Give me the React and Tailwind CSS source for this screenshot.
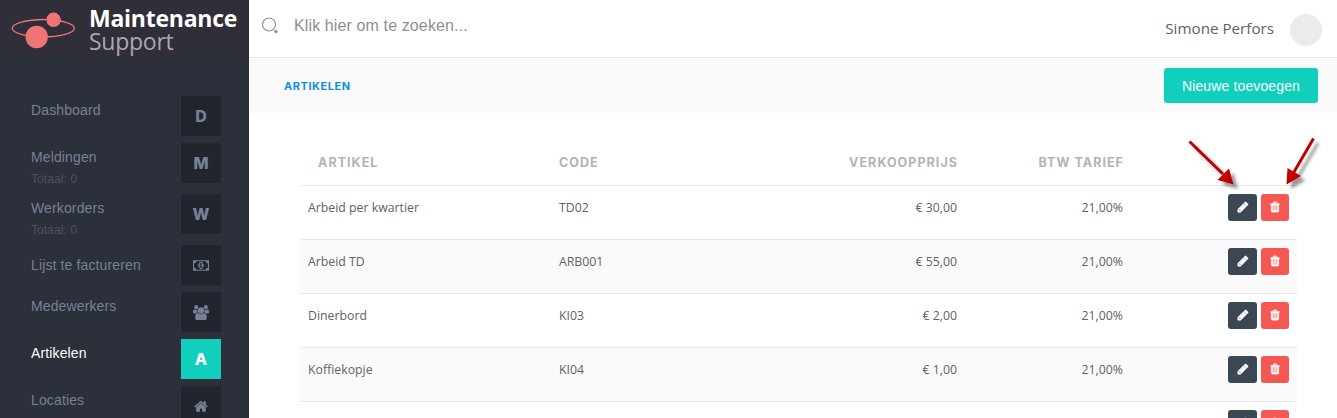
const ICONS = {
  money: {
    viewBox: '0 0 1920 1792',
    path: 'M768 1152h384v-96h-128v-448h-114l-148 137 77 80q42-37 55-57h2v288h-128v96zm512-256q0 70-21 142t-59.5 134-101.500 101-138 39-138-39-101.500-101-59.500-134-21-142 21-142 59.500-134 101.500-101 138-39 138 39 101.500 101 59.500 134 21 142zm512 256v-512q-106 0-181-75t-75-181h-1152q0 106-75 181t-181 75v512q106 0 181 75t75 181h1152q0-106 75-181t181-75zm128-832v1152q0 26-19 45t-45 19h-1792q-26 0-45-19t-19-45v-1152q0-26 19-45t45-19h1792q26 0 45 19t19 45z',
  },
  users: {
    viewBox: '-64 0 1920 1792',
    path: 'M529 896q-162 5-265 128h-134q-82 0-138-40.500t-56-118.500q0-353 124-353 6 0 43.500 21t97.500 42.500 119 21.500q67 0 133-23-5 37-5 66 0 139 81 256zm1071 637q0 120-73 189.500t-194 69.500h-874q-121 0-194-69.500t-73-189.500q0-53 3.500-103.500t14-109 26.500-108.500 43-97.500 62-81 85.500-53.500 111.500-20q10 0 43 21.500t73 48 107 48 135 21.500 135-21.500 107-48 73-48 43-21.500q61 0 111.500 20t85.500 53.500 62 81 43 97.500 26.500 108.500 14 109 3.500 103.500zm-1024-1277q0 106-75 181t-181 75-181-75-75-181 75-181 181-75 181 75 75 181zm704 384q0 159-112.500 271.500t-271.500 112.500-271.500-112.500-112.500-271.500 112.500-271.500 271.500-112.500 271.500 112.500 112.500 271.500zm576 225q0 78-56 118.500t-138 40.500h-134q-103-123-265-128 81-117 81-256 0-29-5-66 66 23 133 23 59 0 119-21.500t97.500-42.500 43.500-21q124 0 124 353zm-128-609q0 106-75 181t-181 75-181-75-75-181 75-181 181-75 181 75 75 181z',
  },
  home: {
    viewBox: '0 0 1792 1792',
    path: 'M1472 992v480q0 26-19 45t-45 19h-384v-384h-256v384h-384q-26 0-45-19t-19-45v-480q0-1 .5-3t.5-3l575-474 575 474q1 2 1 6zm223-69l-62 74q-8 9-21 11h-3q-13 0-21-7l-692-577-692 577q-12 8-24 7-13-2-21-11l-62-74q-8-10-7-23.500t11-21.500l719-599q32-26 76-26t76 26l244 204v-195q0-14 9-23t23-9h192q14 0 23 9t9 23v408l219 182q10 8 11 21.500t-7 23.500z',
  },
  pencil: {
    viewBox: '0 0 1792 1792',
    path: 'M491 1536l91-91-235-235-91 91v107h128v128h107zm523-928q0-22-22-22-10 0-17 7l-542 542q-7 7-7 17 0 22 22 22 10 0 17-7l542-542q7-7 7-17zm-54-192l416 416-832 832h-416v-416zm683 96q0 53-37 90l-166 166-416-416 166-165q36-38 90-38 53 0 91 38l235 234q37 39 37 91z',
  },
  trash: {
    viewBox: '0 0 1792 1792',
    path: 'M704 1376v-704q0-14-9-23t-23-9h-64q-14 0-23 9t-9 23v704q0 14 9 23t23 9h64q14 0 23-9t9-23zm256 0v-704q0-14-9-23t-23-9h-64q-14 0-23 9t-9 23v704q0 14 9 23t23 9h64q14 0 23-9t9-23zm256 0v-704q0-14-9-23t-23-9h-64q-14 0-23 9t-9 23v704q0 14 9 23t23 9h64q14 0 23-9t9-23zm-544-992h448l-48-117q-7-9-17-11h-317q-10 2-17 11zm928 32v64q0 14-9 23t-23 9h-96v948q0 83-47 143.500t-113 60.500h-832q-66 0-113-58.500t-47-141.500v-952h-96q-14 0-23-9t-9-23v-64q0-14 9-23t23-9h309l70-167q15-37 54-63t79-26h320q40 0 79 26t54 63l70 167h309q14 0 23 9t9 23z',
  },
};

const menu = [
  { label: 'Dashboard', letter: 'D' },
  { label: 'Meldingen', letter: 'M', sub: 'Totaal: 0' },
  { label: 'Werkorders', letter: 'W', sub: 'Totaal: 0' },
  { label: 'Lijst te factureren', icon: 'money', low: true },
  { label: 'Medewerkers', icon: 'users' },
  { label: 'Artikelen', letter: 'A', active: true },
  { label: 'Locaties', icon: 'home' },
];

const articles = [
  { name: 'Arbeid per kwartier', code: 'TD02', price: '€ 30,00', vat: '21,00%' },
  { name: 'Arbeid TD', code: 'ARB001', price: '€ 55,00', vat: '21,00%' },
  { name: 'Dinerbord', code: 'KI03', price: '€ 2,00', vat: '21,00%' },
  { name: 'Koffiekopje', code: 'KI04', price: '€ 1,00', vat: '21,00%' },
  { name: '', code: '', price: '', vat: '' },
];

function Icon({ name, className }) {
  return (
    <svg viewBox={ICONS[name].viewBox} className={className} fill="currentColor">
      <path d={ICONS[name].path} />
    </svg>
  );
}

function Logo() {
  return (
    <div className="flex h-16 bg-linear-to-b from-[#2f2e39] from-85% to-[#2b303b] pl-[10px]">
      <svg width="68" height="56" viewBox="10 0 68 56" className="shrink-0">
        <ellipse cx="43.300" cy="28.200" rx="31" ry="8.700" fill="none" stroke="#ef7575" strokeWidth="1.300" />
        <circle cx="53.600" cy="19.800" r="7.200" fill="#ef7575" />
        <circle cx="36.700" cy="37" r="11.200" fill="#ef7575" />
      </svg>
      <div className="ml-[11px] pt-[7px] font-[Open_Sans] whitespace-nowrap">
        <p className="text-[23px] leading-[23px] font-bold tracking-[-0.250px] text-white">Maintenance</p>
        <p className="text-[23px] leading-[23px] tracking-[-0.250px] text-[#a9a9ac]">Support</p>
      </div>
    </div>
  );
}

function MenuItem({ item }) {
  return (
    <li className={`flex justify-between ${item.sub ? 'h-[51px]' : 'h-[47px]'}`}>
      <div className={item.low ? 'pt-[10px]' : 'pt-1'}>
        <p className={`text-sm leading-5 tracking-[0.130px] ${item.active ? 'text-white' : 'text-[#788195]'}`}>
          {item.label}
        </p>
        {item.sub && <p className="mt-0.5 text-xs leading-5 tracking-[0.100px] text-[#4c5060]">{item.sub}</p>}
      </div>
      <span
        className={`flex h-10 w-10 items-center justify-center font-[Inter] text-base font-extrabold ${
          item.active ? 'bg-[#10cfbd] text-white' : 'bg-[#21252d] text-[#788195]'
        }`}
      >
        {item.icon ? <Icon name={item.icon} className="h-[15px] w-4" /> : item.letter}
      </span>
    </li>
  );
}

function Sidebar() {
  return (
    <aside className="w-[249px] shrink-0 overflow-hidden bg-[#2b303b] font-['Liberation_Sans',sans-serif]">
      <Logo />
      <ul className="pt-8 pr-7 pl-[31px]">
        {menu.map((item) => (
          <MenuItem key={item.label} item={item} />
        ))}
      </ul>
    </aside>
  );
}

function Arrows() {
  return (
    <svg width="157" height="80" viewBox="1180 130 157 80" className="pointer-events-none absolute top-[130px] left-[1180px]">
      <defs>
        <filter id="shade" x="-30%" y="-30%" width="170%" height="170%">
          <feDropShadow dx="4.500" dy="4.500" stdDeviation="1.500" floodColor="#000" floodOpacity="0.400" />
        </filter>
      </defs>
      <g filter="url(#shade)" stroke="#c00000" fill="#c00000">
        <path d="M1189.500 141.500L1223 174" strokeWidth="3" />
        <path d="M1233.500 184.500L1217.500 180L1229 168.500Z" stroke="none" />
        <path d="M1313.500 138.500L1294 172" strokeWidth="3" />
        <path d="M1286.500 184.500L1287.500 168L1301 176Z" stroke="none" />
      </g>
    </svg>
  );
}

export default function App() {
  return (
    <div className="relative flex h-[418px] w-[1337px] overflow-hidden bg-white font-['Open_Sans',sans-serif]">
      <Sidebar />
      <main className="min-w-0 flex-1">
        <header className="flex h-[58px] items-start justify-between border-b border-[#e8e8e8] pr-[15px] pl-3">
          <div className="flex items-center pt-3.5 font-['Liberation_Sans',sans-serif] text-[#8f8f8f]">
            <svg width="18" height="18" viewBox="0 0 18 18" fill="none" stroke="currentColor">
              <circle cx="8" cy="7.500" r="6.500" strokeWidth="1.200" />
              <path d="M12.500 12L13.500 13.500" strokeWidth="1" />
              <path d="M13.300 14.700H16.700M15 13V16.300" strokeWidth="1.600" />
            </svg>
            <span className="ml-[15px] text-base leading-6 tracking-[0.120px]">Klik hier om te zoeken...</span>
          </div>
          <div className="flex items-start pt-3.5">
            <span className="pt-0.5 text-[15.200px] leading-6 text-[#626262]">Simone Perfors</span>
            <span className="ml-4 h-8 w-8 rounded-full bg-[#ebebeb]" />
          </div>
        </header>

        <div className="flex h-[55px] items-center justify-between bg-[#fafafa] pr-[19px] pl-[35px]">
          <h1 className="pt-0.5 font-['Inter',sans-serif] text-[11px] font-bold tracking-[0.550px] text-[#0f8fdb]">
            ARTIKELEN
          </h1>
          <button className="h-[35px] w-[154px] rounded-[3px] bg-[#10cfbd] font-['Liberation_Sans',sans-serif] text-sm tracking-[0.130px] text-white">
            Nieuwe toevoegen
          </button>
        </div>

        <table className="mt-[26px] ml-[51px] w-[997px] table-fixed border-collapse text-[12.300px] text-[#626262]">
          <colgroup>
            <col className="w-[251px]" />
            <col className="w-[240px]" />
            <col className="w-[174px]" />
            <col className="w-[166px]" />
            <col className="w-[166px]" />
          </colgroup>
          <thead>
            <tr className="h-[46px] border-b border-[#e8e8e8] font-['Inter',sans-serif] text-[12.500px] tracking-[1.050px] text-[#b3b3b3]">
              <th className="pt-1 pl-[18px] text-left font-bold">ARTIKEL</th>
              <th className="pt-1 pl-2 text-left font-bold">CODE</th>
              <th className="pt-1 pr-[7px] text-right font-bold">VERKOOPPRIJS</th>
              <th className="pt-1 pr-[7px] text-right font-bold">BTW TARIEF</th>
              <th />
            </tr>
          </thead>
          <tbody>
            {articles.map((row, i) => (
              <tr key={i} className="h-[54px] border-b border-[#e8e8e8] align-top even:bg-[#fafafa]">
                <td className="px-2 pt-3 leading-5">{row.name}</td>
                <td className="px-2 pt-3 leading-5">{row.code}</td>
                <td className="px-2 pt-3 text-right leading-5">{row.price}</td>
                <td className="px-2 pt-3 text-right leading-5">{row.vat}</td>
                <td className="pt-2 pr-2">
                  <div className="flex justify-end gap-1 text-white">
                    <button className="flex h-[27px] w-[29px] items-center justify-center rounded-[3px] bg-[#3b4752]">
                      <Icon name="pencil" className="h-3 w-3 stroke-current stroke-[90]" />
                    </button>
                    <button className="flex h-[27px] w-7 items-center justify-center rounded-[3px] bg-[#f55753]">
                      <Icon name="trash" className="h-3 w-3 stroke-current stroke-[40]" />
                    </button>
                  </div>
                </td>
              </tr>
            ))}
          </tbody>
        </table>
      </main>
      <Arrows />
    </div>
  );
}
